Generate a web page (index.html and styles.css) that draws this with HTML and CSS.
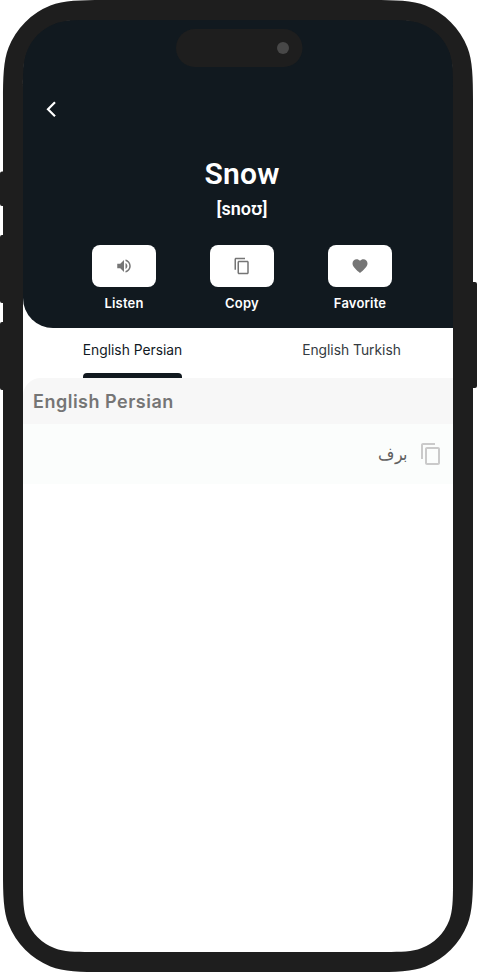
FILE: index.html
```html
<!DOCTYPE html>
<html lang="en">
<head>
<meta charset="utf-8">
<title>Snow</title>
<link rel="stylesheet" href="styles.css">
</head>
<body>
<div class="device">
  <main class="screen">
    <div class="content">
      <header class="hero">
        <button class="back" aria-label="Back"><svg width="12" height="18" viewBox="0 0 12 18"><path d="M10 2.300 3 9.300l7 7" fill="none" stroke="#fff" stroke-width="2.200"/></svg></button>
        <h1 class="word">Snow</h1>
        <p class="phonetic">[snoʊ]</p>
        <div class="actions">
          <div class="action">
            <button class="tile" aria-label="Listen"><svg width="18" height="18" viewBox="0 0 24 24"><path d="M3 9v6h4l5 5V4L7 9H3zm13.500 3c0-1.770-1.020-3.290-2.500-4.030v8.050c1.480-.730 2.500-2.250 2.500-4.020zM14 3.230v2.060c2.890.860 5 3.540 5 6.710s-2.110 5.850-5 6.710v2.060c4.010-.910 7-4.490 7-8.770s-2.990-7.860-7-8.770z"/></svg></button>
            <span class="label">Listen</span>
          </div>
          <div class="action">
            <button class="tile" aria-label="Copy"><svg width="18" height="18" viewBox="0 0 24 24"><path d="M16 1H4c-1.100 0-2 .9-2 2v14h2V3h12V1zm3 4H8c-1.100 0-2 .9-2 2v14c0 1.100.9 2 2 2h11c1.100 0 2-.9 2-2V7c0-1.100-.9-2-2-2zm0 16H8V7h11v14z"/></svg></button>
            <span class="label">Copy</span>
          </div>
          <div class="action">
            <button class="tile" aria-label="Favorite"><svg width="18" height="18" viewBox="0 0 24 24"><path d="m12 21.350-1.450-1.320C5.400 15.360 2 12.280 2 8.500 2 5.420 4.420 3 7.500 3c1.740 0 3.410.810 4.500 2.090C13.090 3.810 14.760 3 16.500 3 19.580 3 22 5.420 22 8.500c0 3.780-3.400 6.860-8.550 11.540L12 21.350z"/></svg></button>
            <span class="label">Favorite</span>
          </div>
        </div>
      </header>
      <nav class="tabs">
        <a class="tab active">English Persian</a>
        <a class="tab">English Turkish</a>
      </nav>
      <section>
        <h2 class="section-title">English Persian</h2>
        <div class="entry">
          <span class="translation" lang="fa" dir="rtl">برف</span>
          <svg class="copy" width="24" height="24" viewBox="0 0 24 24"><path d="M16 1H4c-1.100 0-2 .9-2 2v14h2V3h12V1zm3 4H8c-1.100 0-2 .9-2 2v14c0 1.100.9 2 2 2h11c1.100 0 2-.9 2-2V7c0-1.100-.9-2-2-2zm0 16H8V7h11v14z"/></svg>
        </div>
      </section>
    </div>
  </main>
  <svg class="frame" width="477" height="972" viewBox="0 0 477 972">
    <path class="bezel" fill-rule="evenodd" d="M3 100C3 78 3.400 60.400 8.600 47.400A74.700 74.700 0 0 1 50.400 5.600C63.400.4 81 0 103 0H373C395 0 412.600.4 425.600 5.600A74.700 74.700 0 0 1 467.400 47.400C472.600 60.400 473 78 473 100V872C473 894 472.600 911.600 467.400 924.600A74.700 74.700 0 0 1 425.600 966.400C412.600 971.600 395 972 373 972H103C81 972 63.400 971.600 50.400 966.400A74.700 74.700 0 0 1 8.600 924.600C3.400 911.600 3 894 3 872Z
    M23 87C23 72.300 23.300 60.500 26.700 51.800A50 50 0 0 1 54.800 23.700C63.500 20.300 75.300 20 90 20H386C400.700 20 412.500 20.300 421.200 23.700A50 50 0 0 1 449.300 51.800C452.700 60.500 453 72.300 453 87V885C453 899.700 452.700 911.500 449.300 920.200A50 50 0 0 1 421.200 948.300C412.500 951.700 400.700 952 386 952H90C75.300 952 63.500 951.700 54.800 948.300A50 50 0 0 1 26.700 920.200C23.300 911.500 23 899.700 23 885Z"/>
    <path class="bezel" d="M4 171.500H2Q0 171.500 0 173.500V204Q0 206 2 206H4ZM4 235H2Q0 235 0 237V301Q0 303 2 303H4ZM4 322H2Q0 322 0 324V388Q0 390 2 390H4ZM472 282H475Q477 282 477 284V386Q477 388 475 388H472Z"/>
    <rect class="bezel" x="176" y="29" width="126.500" height="38" rx="19"/>
    <circle cx="283" cy="48" r="6" fill="#484848"/>
  </svg>
</div>
</body>
</html>
```
FILE: styles.css
```css
* { box-sizing: border-box; }
body { margin: 0; background: #fff; font-family: Inter, "Noto Sans", sans-serif; }
button { border: 0; padding: 0; background: none; display: flex; }
h1, h2, p { margin: 0; }

.device { position: relative; width: 477px; height: 972px; overflow: hidden; padding: 20px 24px 20px 23px; }
.frame { position: absolute; inset: 0; pointer-events: none; }
.bezel { fill: #1e1e1e; }
.screen { width: 430px; height: 932px; overflow: hidden; border-radius: 48px; background: #fff; }
.content { width: 438px; }

.hero { height: 307.500px; padding-top: 80px; display: flex; flex-direction: column; align-items: center; background: #11191f; color: #fff; border-bottom-left-radius: 30px; }
.back { align-self: flex-start; margin-left: 22px; }
.word { margin-top: 38px; font: 600 30px/36px Roboto, sans-serif; letter-spacing: .2px; }
.phonetic { margin-top: 5px; font: 600 18px/24px Roboto, "Noto Sans", sans-serif; }
.actions { display: flex; gap: 54px; margin-top: 24px; }
.action { width: 64px; display: flex; flex-direction: column; align-items: center; }
.tile { width: 64px; height: 42px; border-radius: 8px; background: #fff; align-items: center; justify-content: center; fill: #757575; }
.label { margin-top: 8px; font-size: 13px; line-height: 16px; font-weight: 600; letter-spacing: .2px; }

.tabs { height: 50.500px; display: grid; grid-template-columns: 1fr 1fr; justify-items: center; font-size: 13.800px; line-height: 20px; color: #343a40; }
.tab { padding-top: 12.500px; white-space: nowrap; }
.tab.active { position: relative; color: #11191f; }
.tab.active::after { content: ""; position: absolute; left: 0; right: 0; bottom: 0; height: 5px; background: #11191f; border-radius: 4px 4px 0 0; }

.section-title { height: 46px; padding: 1px 0 0 10px; background: #f7f7f7; color: #757575; border-top-left-radius: 18px; font-size: 18px; line-height: 45px; font-weight: 600; letter-spacing: .5px; }
.entry { height: 60px; padding-right: 18px; display: flex; align-items: center; justify-content: flex-end; gap: 11px; background: #fbfdfc; }
.translation { color: #616161; font-size: 17px; line-height: 28px; transform: scaleX(.93); transform-origin: right; }
.copy { fill: #cacaca; }
```
